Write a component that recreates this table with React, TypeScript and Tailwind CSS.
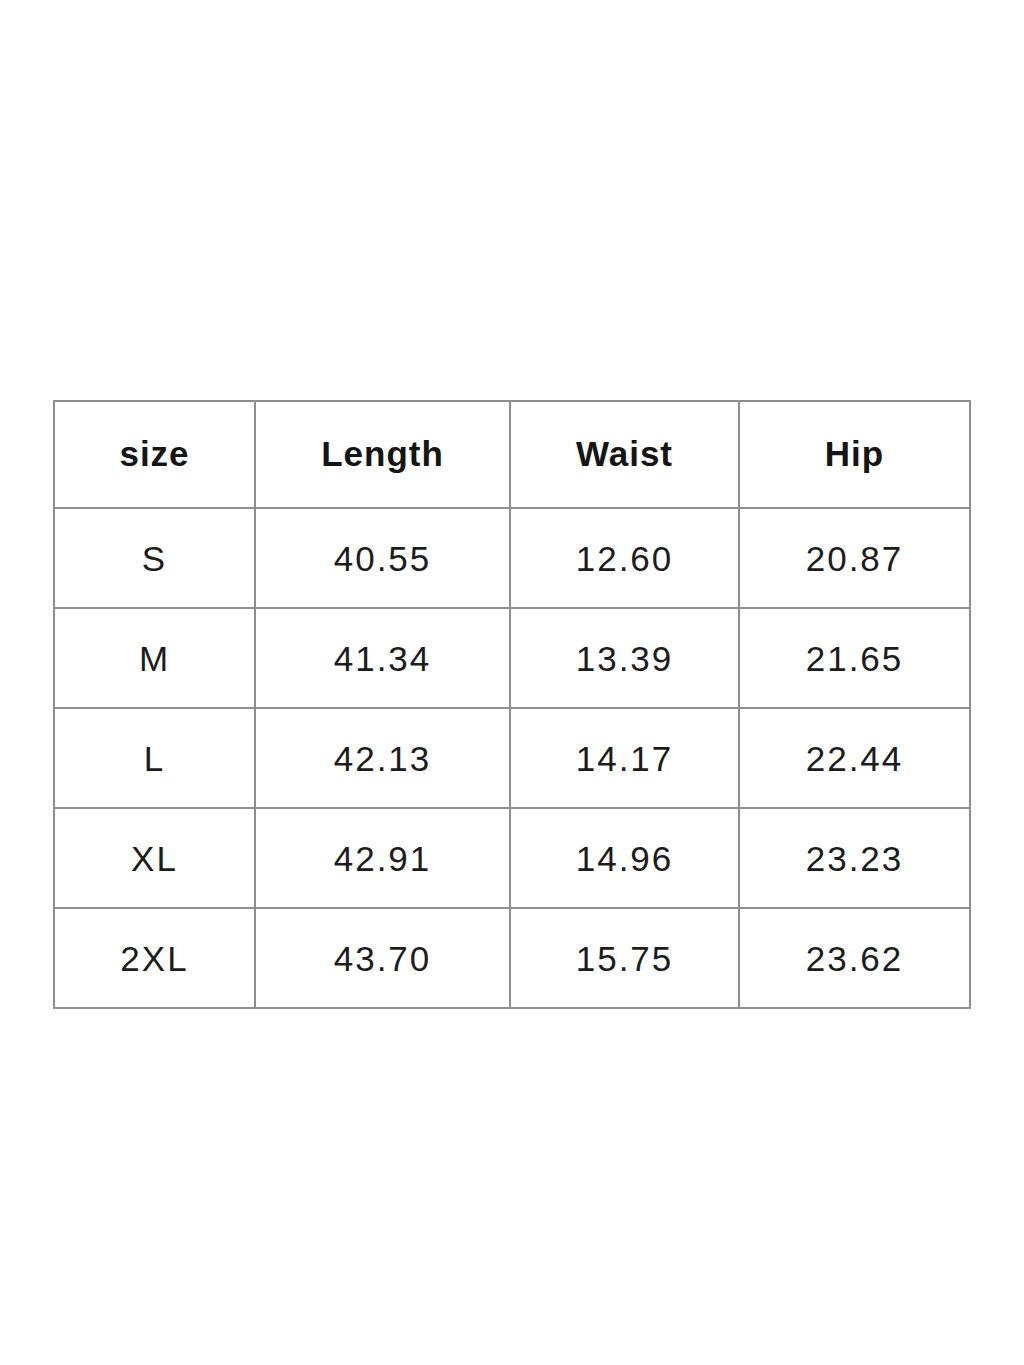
import React from "react";

const headers = ["size", "Length", "Waist", "Hip"];

const rows = [
  ["S", "40.55", "12.60", "20.87"],
  ["M", "41.34", "13.39", "21.65"],
  ["L", "42.13", "14.17", "22.44"],
  ["XL", "42.91", "14.96", "23.23"],
  ["2XL", "43.70", "15.75", "23.62"],
];

const App = () => {
  return (
    <div
      className="w-[1024px] h-[1365px] bg-white pt-[400px] pl-[53px]"
      style={{ fontFamily: '"Liberation Sans", Arial, sans-serif' }}
    >
      <div className="w-[918px] grid grid-cols-[201px_255px_229px_231px] border-l-2 border-t-2 border-[#8e8e8e] text-[#151515]">
        {headers.map((h) => (
          <div
            key={h}
            className="h-[107px] flex items-center justify-center border-r-2 border-b-2 border-[#8e8e8e] font-bold text-[35px] tracking-[1px]"
          >
            {h}
          </div>
        ))}
        {rows.map((r) =>
          r.map((c, i) => (
            <div
              key={r[0] + i}
              className="h-[100px] flex items-center justify-center pt-[3px] border-r-2 border-b-2 border-[#8e8e8e] text-[35px] tracking-[2px] text-[#1c1c1c]"
            >
              {c}
            </div>
          ))
        )}
      </div>
    </div>
  );
};

export default App;
